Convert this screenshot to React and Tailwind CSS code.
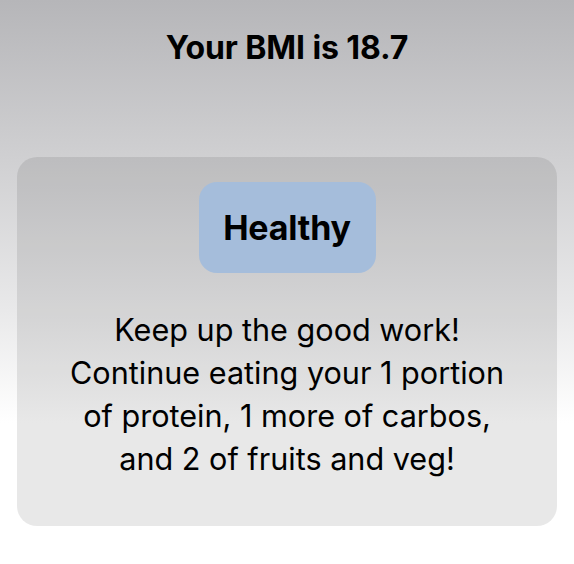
export default function App() {
  return (
    <div
      className="min-h-[564px] w-full bg-gradient-to-b from-[#b6b6b9] via-[#e9e9ea] via-55% to-white to-75% text-black"
      style={{ fontFamily: "Inter, 'Noto Sans', sans-serif" }}
    >
      {/* Title */}
      <div className="pt-[29px] text-center text-[32px] leading-[38px] font-bold tracking-[-0.1px]">
        Your BMI is 18.7
      </div>

      {/* Result card */}
      <div className="mx-[17px] mt-[90px] flex flex-col items-center rounded-[20px] bg-black/[0.09] pt-[25px] pb-[46px]">
        <div className="flex h-[91px] w-[177px] items-center justify-center rounded-[18px] bg-[#a5bddb]">
          <span className="text-[34px] font-bold tracking-[-0.2px]">Healthy</span>
        </div>
        <p className="mt-[35px] text-center text-[30.6px] leading-[43px]">
          Keep up the good work!
          <br />
          Continue eating your 1 portion
          <br />
          of protein, 1 more of carbos,
          <br />
          and 2 of fruits and veg!
        </p>
      </div>
    </div>
  );
}
